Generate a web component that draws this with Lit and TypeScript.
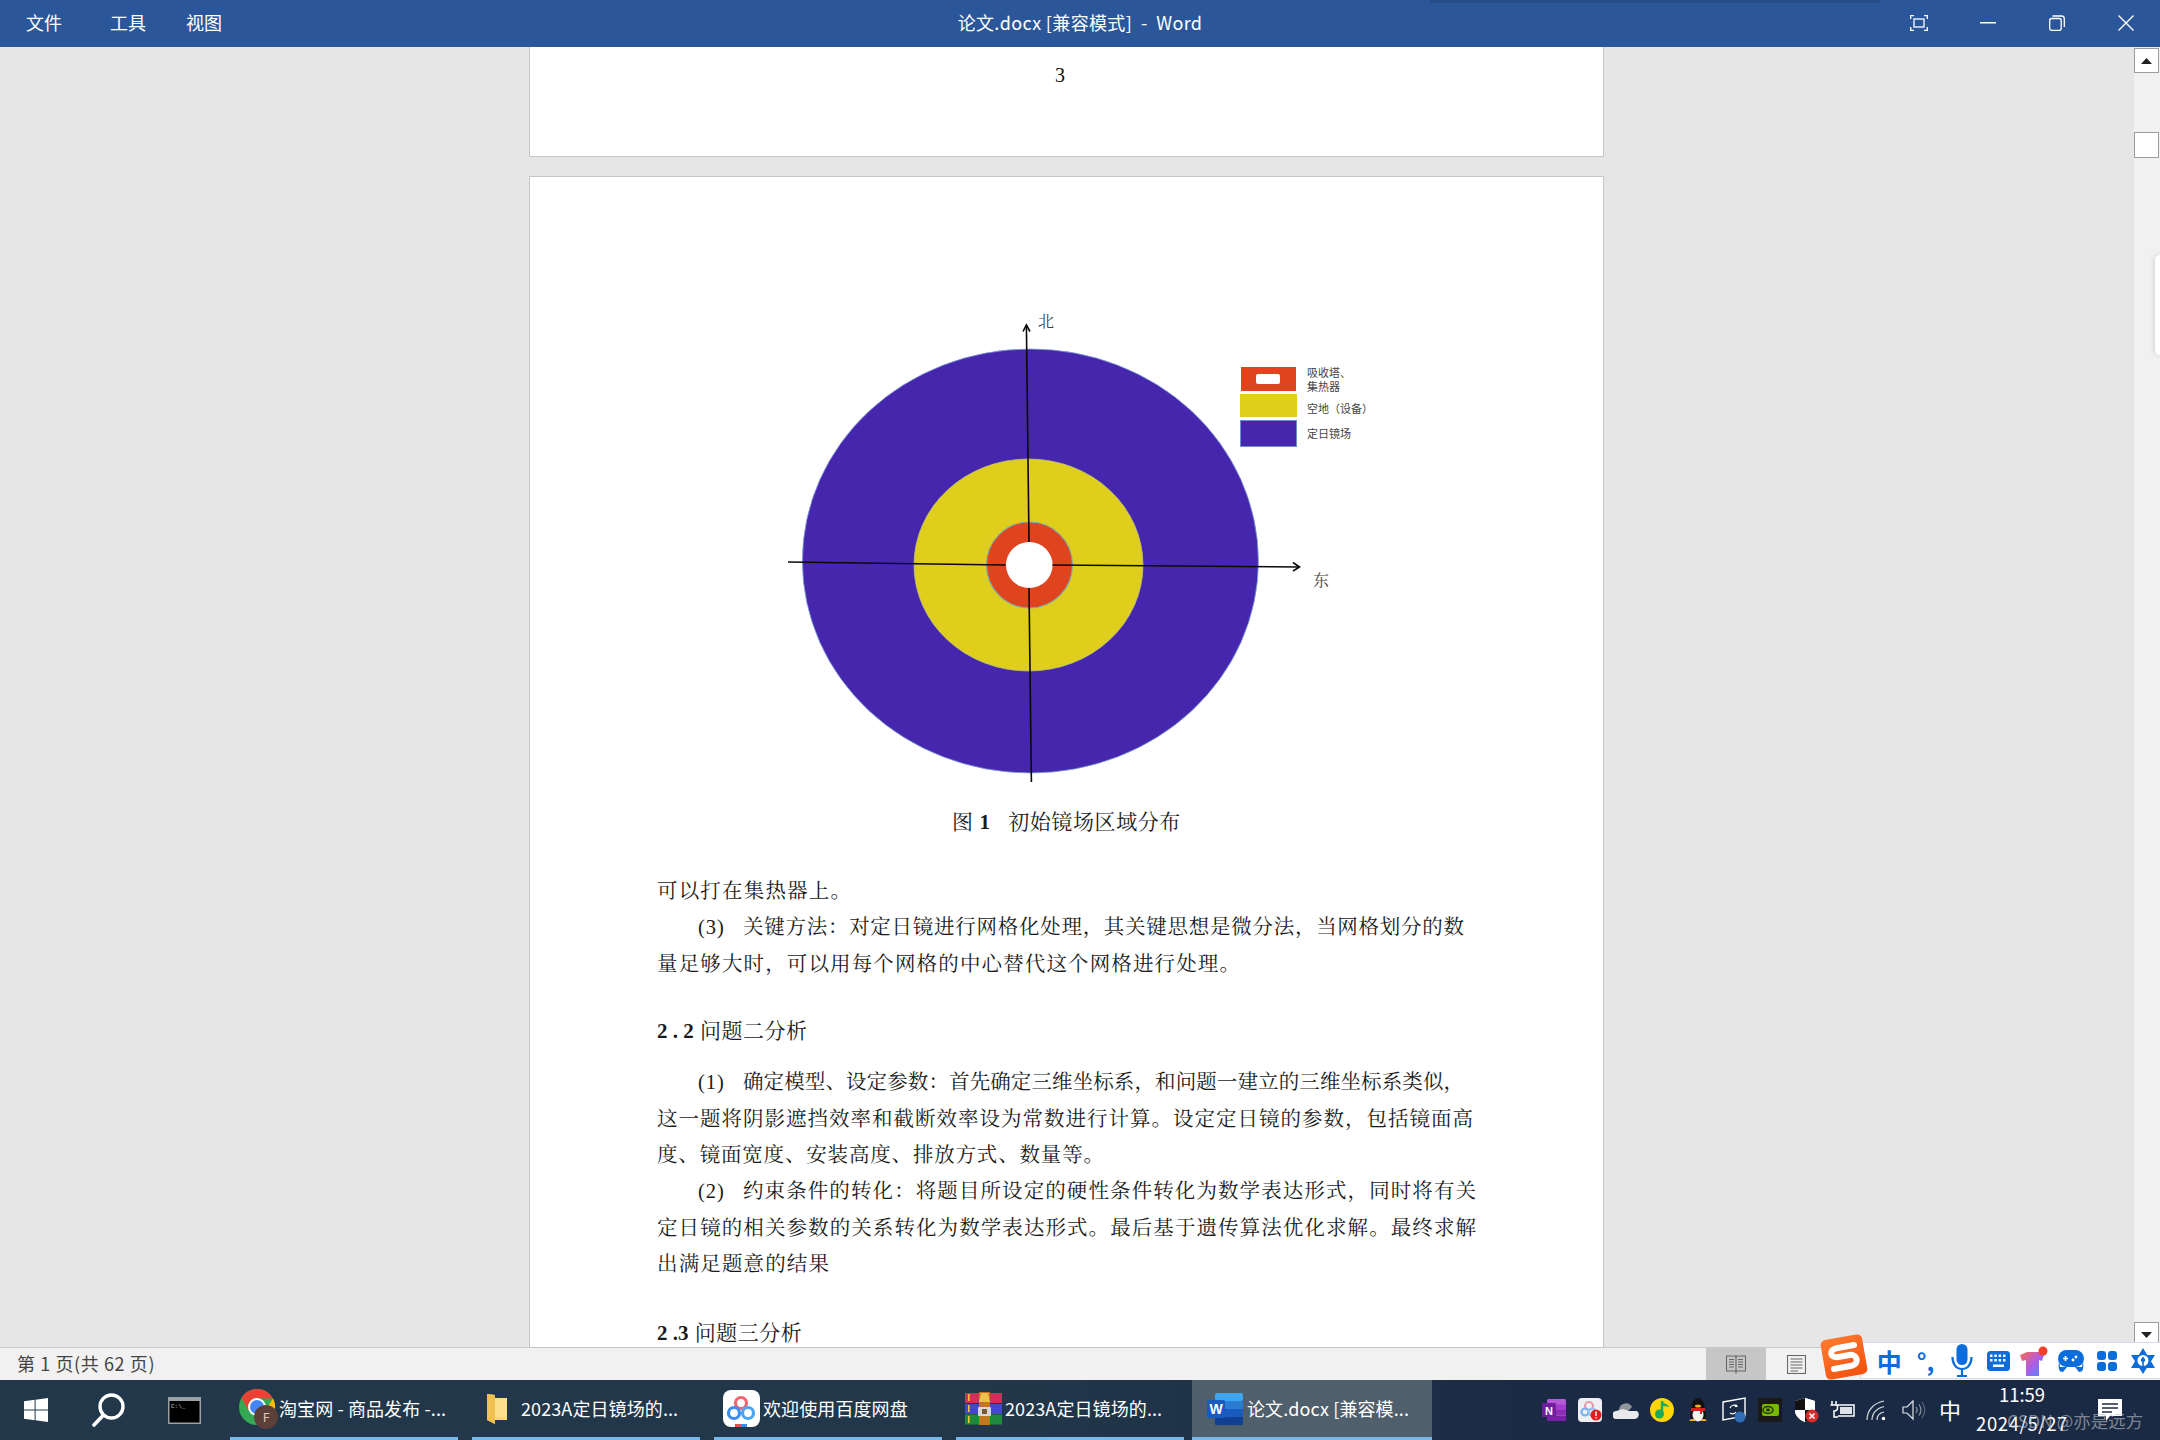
import { LitElement, html, css } from "lit";
import { customElement } from "lit/decorators.js";

type Line = { text: string; end: number; marker?: string };
const START = 657;

const block1: Line[] = [
  { text: "可以打在集热器上。", end: 851 },
  { marker: "(3)", text: "关键方法：对定日镜进行网格化处理，其关键思想是微分法，当网格划分的数", end: 1464 },
  { text: "量足够大时，可以用每个网格的中心替代这个网格进行处理。", end: 1240 },
];
const block2: Line[] = [
  { marker: "(1)", text: "确定模型、设定参数：首先确定三维坐标系，和问题一建立的三维坐标系类似，", end: 1464 },
  { text: "这一题将阴影遮挡效率和截断效率设为常数进行计算。设定定日镜的参数，包括镜面高", end: 1473 },
  { text: "度、镜面宽度、安装高度、排放方式、数量等。", end: 1104 },
  { marker: "(2)", text: "约束条件的转化：将题目所设定的硬性条件转化为数学表达形式，同时将有关", end: 1476 },
  { text: "定日镜的相关参数的关系转化为数学表达形式。最后基于遗传算法优化求解。最终求解", end: 1476 },
  { text: "出满足题意的结果", end: 829 },
];

const figure = html`<svg class="figure" viewBox="530 177 1073 623" width="1073" height="623">
  <ellipse cx="1030.4" cy="561" rx="228" ry="212" fill="#4626ad" stroke="#7f9fd8" stroke-width=".8"/>
  <ellipse cx="1028.5" cy="565" rx="114.5" ry="106" fill="#dfce1c" stroke="#b9c47a" stroke-width=".8"/>
  <circle cx="1029.5" cy="565" r="43" fill="#e0441e" stroke="#7fa9a8" stroke-width="1.2"/>
  <ellipse cx="1029.3" cy="565" rx="23.3" ry="23" fill="#fff"/>
  <g stroke="#0a0a0a" stroke-width="1.6" fill="none">
    <path d="M1026.4 325L1029 542M1029 588L1031.4 782M788 562L1005.7 565M1052.5 565L1299 567"/>
    <path d="M1023 331.5L1026.4 325L1030 331.5M1293 562.5L1299.5 567L1293 571"/>
  </g>
  <g font-family="'Liberation Serif','Noto Serif CJK SC','Noto Sans CJK SC',serif" fill="#444">
    <text x="1038" y="327" font-size="16">北</text>
    <text x="1313" y="586" font-size="16">东</text>
  </g>
  <rect x="1241" y="367" width="55" height="24" fill="#e0441e"/>
  <rect x="1256" y="374" width="24" height="10" rx="2" fill="#fff"/>
  <rect x="1240" y="394" width="57" height="23" fill="#dfce1c"/>
  <rect x="1240.5" y="420.5" width="56" height="26" fill="#4626ad" stroke="#6d8fd0"/>
  <g font-family="'Noto Sans CJK SC',sans-serif" font-size="11" fill="#444">
    <text x="1307" y="377">吸收塔、</text>
    <text x="1307" y="391">集热器</text>
    <text x="1307" y="413">空地（设备）</text>
    <text x="1307" y="438">定日镜场</text>
  </g>
</svg>`;

const ico = {
  win: html`<svg width="24" height="24" viewBox="0 0 24 24" fill="#fff"><path d="M0 3.3L10.6 1.8V11.5H0ZM11.6 1.7L24 0V11.5H11.6ZM0 12.5H10.6V22.2L0 20.7ZM11.6 12.5H24V24L11.6 22.3Z"/></svg>`,
  search: html`<svg width="34" height="34" viewBox="0 0 34 34" fill="none" stroke="#fff"><circle cx="20.5" cy="13.5" r="11.5" stroke-width="3.4"/><path d="M12 22.5L3 32" stroke-width="3.6" stroke-linecap="round"/></svg>`,
  cmd: html`<svg width="33" height="27" viewBox="0 0 33 27"><rect width="33" height="27" fill="#9aa0a4"/><rect x="1.5" y="4" width="30" height="21.5" fill="#000"/><text x="3" y="11" font-size="6" font-family="'Liberation Mono',monospace" fill="#ccc">C:\\_</text></svg>`,
  chrome: html`<svg width="40" height="42" viewBox="0 0 40 42">
    <circle cx="18" cy="19" r="18" fill="#34a853"/>
    <path d="M18 1A18 18 0 0 1 34 10.500L18 10.500Z M18 1A18 18 0 0 0 2.400 10L10 23L18 10.500Z" fill="#ea4335"/>
    <path d="M34 10.500A18 18 0 0 1 18 37L26 23Z" fill="#fbbc05"/>
    <circle cx="18" cy="19" r="9" fill="#fff"/><circle cx="18" cy="19" r="7" fill="#4285f4"/>
    <circle cx="27" cy="29" r="12" fill="#5b3f38"/>
    <text x="27" y="34" text-anchor="middle" font-size="13" font-family="'Noto Sans',sans-serif" fill="#d9c8c0">F</text></svg>`,
  folder: html`<svg width="34" height="32" viewBox="0 0 34 32"><path d="M6 1L14 2V5H26V27H14V31L6 27Z" fill="#fcd670"/><path d="M6 1L14 2V31L6 27Z" fill="#f0c050"/><path d="M14 5H26V24H14Z" fill="#fde08a"/></svg>`,
  baidu: html`<svg width="37" height="37" viewBox="0 0 37 37"><rect width="37" height="37" rx="8" fill="#fff"/><g fill="none" stroke-width="3.200"><circle cx="18" cy="13" r="5.500" stroke="#f0656f"/><circle cx="11" cy="23" r="5.500" stroke="#3d8bf0"/><circle cx="25" cy="23" r="5.500" stroke="#49a6f7"/></g><rect x="12" y="34" width="6" height="3" fill="#ea4d4d"/><rect x="18" y="34" width="6" height="3" fill="#3d8bf0"/></svg>`,
  rar: html`<svg width="37" height="33" viewBox="0 0 37 33"><rect y="1" width="37" height="10" fill="#cf2f5a"/><rect y="12" width="37" height="10" fill="#4248c8"/><rect y="22.500" width="37" height="10" fill="#1d8a3d"/><rect x="3" y="2" width="1.600" height="7" fill="#f5c330"/><rect x="3" y="13" width="1.600" height="7" fill="#f5c330"/><rect x="3" y="24" width="1.600" height="7" fill="#f5c330"/><rect x="14" y="0" width="11" height="33" fill="#c4751e"/><path d="M14 10L16 1H23L25 10Z" fill="#ecc04a"/><rect x="13" y="15" width="13" height="9" rx="1" fill="#d7d7d7"/><rect x="17" y="17" width="5" height="5" fill="#7a5a30"/></svg>`,
  word: html`<svg width="36" height="32" viewBox="0 0 36 32"><rect x="8" width="28" height="32" rx="2" fill="#185abd"/><rect x="8" width="28" height="8" rx="2" fill="#41a5ee"/><rect x="8" y="8" width="28" height="8" fill="#2b7cd3"/><rect x="8" y="16" width="28" height="8" fill="#185abd"/><rect x="8" y="24" width="28" height="8" rx="1" fill="#103f91"/><rect y="7" width="18" height="18" rx="1.500" fill="#185abd"/><text x="9" y="21" text-anchor="middle" font-size="14" font-weight="700" font-family="'Liberation Sans',sans-serif" fill="#fff">W</text></svg>`,
};

const tray = [
  html`<svg width="24" height="22" viewBox="0 0 24 22"><rect x="5" width="19" height="22" rx="1.500" fill="#b55ad6"/><rect x="14" y="5.500" width="10" height="5.500" fill="#a33ccf"/><rect x="14" y="11" width="10" height="5.500" fill="#8a2fb5"/><rect x="5" y="17" width="19" height="5" fill="#7a1fa8"/><rect y="4" width="14" height="14" rx="1" fill="#6d1f9d"/><text x="7" y="15.500" text-anchor="middle" font-size="11" font-weight="700" font-family="'Liberation Sans',sans-serif" fill="#fff">N</text></svg>`,
  html`<svg width="24" height="24" viewBox="0 0 24 24"><rect width="24" height="24" rx="4" fill="#eef0f4"/><g fill="none" stroke-width="2.200"><circle cx="11" cy="8" r="4" stroke="#e79aa6"/><circle cx="7" cy="14" r="3.500" stroke="#7bb2f0"/><circle cx="14" cy="14" r="3.500" stroke="#8cc4f5"/></g><circle cx="18" cy="17" r="5.500" fill="#e02020"/><rect x="17.300" y="13.500" width="1.400" height="4.500" fill="#fff"/><rect x="17.300" y="19" width="1.400" height="1.400" fill="#fff"/></svg>`,
  html`<svg width="26" height="18" viewBox="0 0 26 18"><path d="M6 8A7 7 0 0 1 19 6L14 11L6 10Z" fill="#8f959b"/><path d="M4 18A4 4 0 0 1 3 10L10 8L16 10L24 10A4.500 4.500 0 0 1 22 18Z" fill="#e8e9ea"/></svg>`,
  html`<svg width="24" height="24" viewBox="0 0 24 24"><ellipse cx="12" cy="12" rx="12" ry="12" fill="#fdd60a"/><path d="M12 3V15" stroke="#1ba95f" stroke-width="2.400"/><path d="M12 3C14 6 18 6 19 9C16 8 14 8 12 8Z" fill="#1ba95f"/><circle cx="9.500" cy="16" r="4.500" fill="#1ba95f"/></svg>`,
  html`<svg width="20" height="24" viewBox="0 0 20 24"><ellipse cx="10" cy="9" rx="6.500" ry="9" fill="#111"/><ellipse cx="10" cy="17" rx="8" ry="7" fill="#111"/><ellipse cx="10" cy="17" rx="5.500" ry="6.500" fill="#f4f4f4"/><path d="M3 10H17V13H14V16H12V13H3Z" fill="#d81e1e"/><ellipse cx="10" cy="8" rx="3" ry="1.500" fill="#f2b01e"/><path d="M1 23H8L6 21H3ZM12 23H19L17 21H14Z" fill="#f2b01e"/></svg>`,
  html`<svg width="26" height="26" viewBox="0 0 26 26" fill="none"><path d="M2 5L24 1V19L2 23Z" stroke="#fff" stroke-width="1.400"/><path d="M9 11A4.500 4.500 0 0 1 16 9M15 15A4.500 4.500 0 0 1 9 16" stroke="#fff" stroke-width="1.200"/><path d="M15 7L17 10L13.500 10Z" fill="#fff"/><circle cx="19" cy="20" r="5.500" fill="#2f6db5"/></svg>`,
  html`<svg width="24" height="24" viewBox="0 0 24 24"><rect width="24" height="24" fill="#1a1a1a"/><rect x="4" y="6" width="17" height="12" rx="2" fill="#76b900"/><ellipse cx="10" cy="12" rx="5" ry="3.500" fill="none" stroke="#26320f" stroke-width="1.500"/><ellipse cx="10" cy="12" rx="2" ry="1.400" fill="#26320f"/></svg>`,
  html`<svg width="25" height="25" viewBox="0 0 25 25"><path d="M11 0L21 3V12C21 18 16 22 11 24C6 22 1 18 1 12V3Z" fill="#fff"/><path d="M11 0V12H1V3ZM11 12H21C21 18 16 22 11 24Z" fill="#111"/><path d="M11 0L21 3V12H11ZM1 12H11V24C6 22 1 18 1 12Z" fill="#fff"/><circle cx="18" cy="18" r="6.500" fill="#d92b2b"/><path d="M15.500 15.500L20.500 20.500M20.500 15.500L15.500 20.500" stroke="#fff" stroke-width="1.600"/></svg>`,
  html`<svg width="25" height="20" viewBox="0 0 25 20" fill="none" stroke="#fff" stroke-width="1.500"><path d="M2 1V5M6 1V5M0.500 5H7.500V8C7.500 10 6 11 4 11V17H8"/><path d="M8 5H24V16H8"/><rect x="10" y="7" width="12" height="7" fill="#dfe3e8" stroke="none"/></svg>`,
  html`<svg width="24" height="24" viewBox="0 0 24 24" fill="none" stroke="#d8dce2" stroke-width="1.200"><path d="M1 22C1 12 8 5 18 3M6 22C6 15 11 10 18 8.500M11 22C11 18 13 15 18 14"/><circle cx="17.500" cy="20.500" r="1.700" fill="#fff" stroke="none"/></svg>`,
  html`<svg width="24" height="22" viewBox="0 0 24 22" fill="none" stroke="#dfe2e6" stroke-width="1.200"><path d="M1 8H5L11 2V20L5 14H1Z"/><path d="M14 8C15.500 10 15.500 12 14 14M17 5.500C19.500 9 19.500 13 17 16.500" stroke="#8d96a3"/><path d="M20 3C23.500 8 23.500 14 20 19" stroke="#596576"/></svg>`,
];

const ime = [
  html`<span class="zh">中</span>`,
  html`<span class="dot">°,</span>`,
  html`<svg width="22" height="34" viewBox="0 0 22 34"><rect x="5.500" width="11" height="21" rx="5.500" fill="#0a6ddb"/><path d="M1.500 13C1.500 20 5 25 11 25C17 25 20.500 20 20.500 13" fill="none" stroke="#0a6ddb" stroke-width="2.200"/><path d="M11 25V31M6 32H16" stroke="#0a6ddb" stroke-width="2.200"/></svg>`,
  html`<svg width="23" height="20" viewBox="0 0 23 20"><rect width="23" height="20" rx="3.500" fill="#0a6ddb"/><g fill="#fff"><rect x="3" y="3.500" width="2.500" height="2.500"/><rect x="7.300" y="3.500" width="2.500" height="2.500"/><rect x="11.600" y="3.500" width="2.500" height="2.500"/><rect x="16" y="3.500" width="2.500" height="2.500"/><rect x="3" y="8" width="2.500" height="2.500"/><rect x="7.300" y="8" width="2.500" height="2.500"/><rect x="11.600" y="8" width="2.500" height="2.500"/><rect x="16" y="8" width="2.500" height="2.500"/><rect x="6" y="13.500" width="11" height="2.500"/></g></svg>`,
  html`<svg width="28" height="30" viewBox="0 0 28 30"><defs><linearGradient id="sh" x1="0" y1="0" x2="1" y2="1"><stop offset="0" stop-color="#ff6a4a"/><stop offset=".5" stop-color="#b45ce0"/><stop offset="1" stop-color="#4a8cff"/></linearGradient></defs><path d="M0 9L7 6H19L24 9L22 15L19 14V30H6V14L2 15Z" fill="url(#sh)"/><circle cx="23" cy="5" r="4.500" fill="#f0402a"/></svg>`,
  html`<svg width="26" height="24" viewBox="0 0 26 24"><rect y="1" width="26" height="17" rx="8.500" fill="#0a6ddb"/><path d="M1 12C0 20 1 23 5 23L9 18H2ZM25 12C26 20 25 23 21 23L17 18H24Z" fill="#0a6ddb"/><path d="M5 9.500H10M7.500 7V12" stroke="#fff" stroke-width="1.600"/><circle cx="18" cy="8" r="1.400" fill="#fff"/><circle cx="15" cy="11" r="1.400" fill="#fff"/></svg>`,
  html`<svg width="20" height="20" viewBox="0 0 20 20" fill="#0a6ddb"><rect width="9" height="9" rx="3"/><rect x="11" width="9" height="9" rx="3"/><rect y="11" width="9" height="9" rx="3"/><rect x="11" y="11" width="9" height="9" rx="3"/></svg>`,
  html`<svg width="24" height="26" viewBox="0 0 24 26"><path d="M12 0L24 20H0ZM12 26L0 7H24Z" fill="#0a6ddb"/><circle cx="12" cy="13" r="7.500" fill="#0a6ddb"/><circle cx="12" cy="12.500" r="5.500" fill="#fff"/><path d="M12 8.500L14.500 12L12.800 14.500V19H11.200V14.500L9.500 12Z" fill="#0a6ddb"/></svg>`,
];

@customElement("app-root")
export class AppRoot extends LitElement {
  static styles = css`
    :host { display: block; width: 2160px; height: 1440px; overflow: hidden; font-family: "Noto Sans CJK SC", "Noto Sans", sans-serif; }
    svg { display: block; flex: none; }
    .root { position: relative; width: 2160px; height: 1440px; display: flex; flex-direction: column; }

    .title { position: relative; flex: none; height: 47px; background: #2b579a; color: #fff; display: grid; grid-template-columns: 1fr auto 1fr; align-items: center; font-size: 18px; }
    .shade { position: absolute; left: 1430px; top: 0; width: 450px; height: 3px; background: #264c87; }
    .menu { display: flex; padding: 0 0 3px 26px; }
    .menu span:nth-child(2) { margin-left: 48px; }
    .menu span:nth-child(3) { margin-left: 40px; }
    .doc-title { white-space: pre; letter-spacing: .35px; padding-bottom: 3px; }
    .wins { display: flex; justify-content: flex-end; }
    .win { width: 69px; height: 47px; display: flex; align-items: center; justify-content: center; padding-bottom: 1px; box-sizing: border-box; }

    .main { flex: none; height: 1300px; display: flex; background: #e6e6e6; overflow: hidden; }
    .scroller { flex: 1; display: flex; flex-direction: column; align-items: center; overflow: hidden; padding-right: 1px; }
    .page { flex: none; width: 1075px; box-sizing: border-box; background: #fff; border: 1px solid #c6c6c6; }
    .page.top { height: 110px; border-top: none; text-align: center; padding: 12px 13px 0 0; font: 20px/32px "Liberation Serif", serif; color: #111; }
    .page.body { margin-top: 19px; padding: 0 0 400px 127px; }
    .figure { margin-left: -127px; }
    .doc { font-family: "Liberation Serif", "Noto Serif CJK SC", "Noto Sans CJK SC", serif; font-size: 21px; color: #1a1a1a; }
    .caption { margin: 4px 0 0 -127px; width: 1073px; text-align: center; line-height: 36px; letter-spacing: .6px; white-space: pre; }
    b { font-family: "Liberation Serif", serif; font-weight: 700; }
    .para { margin-top: 33px; }
    .para.next { margin-top: 15px; }
    .line { display: flex; height: 36.4px; line-height: 36.4px; white-space: nowrap; font-size: 20.5px; }
    .mark { flex: none; width: 86px; padding-left: 41px; box-sizing: border-box; font-family: "Liberation Serif", serif; letter-spacing: 1px; }
    .txt { flex: 1; text-align: justify; text-align-last: justify; white-space: normal; }
    .h { line-height: 36px; height: 36px; margin-top: 31px; letter-spacing: .5px; white-space: pre; }
    .h b { letter-spacing: 0; padding-right: 1px; }
    .h.two { margin-top: 32px; }

    .sb { flex: none; width: 26px; background: #f1f1f1; display: flex; flex-direction: column; position: relative; }
    .sbb { width: 25px; box-sizing: border-box; background: #fff; border: 1px solid #9c9c9c; display: flex; align-items: center; justify-content: center; }
    .sbb.up { height: 25px; margin-top: 1px; }
    .sbb.thumb { height: 26px; margin-top: 59px; }
    .sbb.down { height: 25px; margin-top: auto; }
    .tab { position: absolute; right: 0; top: 208px; width: 5px; height: 100px; background: #fff; border-radius: 6px 0 0 6px; box-shadow: 0 0 6px rgba(0,0,0,.18); }

    .status { flex: none; height: 33px; background: #f1f1f1; display: flex; align-items: center; color: #444; font-size: 18px; border-top: 1px solid #c6c6c6; box-sizing: border-box; }
    .pages { padding: 0 0 2px 17px; white-space: pre; letter-spacing: .6px; }
    .views { margin-left: auto; margin-right: 334px; display: flex; }
    .view { width: 60px; height: 32px; display: flex; align-items: center; justify-content: center; }
    .view.on { background: #c6c6c6; }

    .taskbar { position: relative; flex: none; height: 60px; display: flex; color: #fff; font-size: 18px; background: linear-gradient(90deg, #22384a 0, #22384a 45%, #1b2a44 72%); }
    .tb { flex: none; height: 60px; display: flex; align-items: center; justify-content: center; }
    .tb.start { width: 72px; }
    .tb.search { width: 64px; justify-content: flex-start; padding-left: 19px; box-sizing: border-box; }
    .tb.cmd { width: 94px; justify-content: flex-start; padding-left: 32px; box-sizing: border-box; }
    .task { flex: none; width: 228px; height: 60px; margin-left: 14px; box-sizing: border-box; padding-left: 9px; border-bottom: 3px solid #76b9ed; display: flex; align-items: center; white-space: nowrap; overflow: hidden; }
    .task.first { margin-left: 0; }
    .task.active { width: 240px; margin-left: 8px; padding-left: 15px; background: #4f5f6b; }
    .task span { letter-spacing: .1px; padding-bottom: 2px; }
    .ti { flex: none; width: 40px; height: 57px; display: flex; align-items: center; }
    .tray { position: absolute; left: 1536px; top: 0; height: 60px; display: flex; align-items: center; }
    .tc { width: 36px; display: flex; align-items: center; justify-content: center; }
    .tc.zh { font-size: 22px; padding-bottom: 2px; box-sizing: border-box; }
    .clock { width: 108px; text-align: center; font-size: 18.5px; line-height: 29px; white-space: nowrap; padding-bottom: 3px; }
    .date { letter-spacing: .6px; }
    .note { margin-left: 16px; }
    .mark-w { position: absolute; left: 2007px; top: 1408px; font-size: 17.5px; line-height: 26px; color: rgba(190,195,200,.62); white-space: nowrap; }

    .ime { position: absolute; left: 1860px; top: 1342px; width: 300px; height: 37px; box-sizing: border-box; background: #fff; border: 1px solid #d3dbe6; border-right: none; display: flex; align-items: center; padding-left: 10px; }
    .ic { flex: none; width: 36.3px; display: flex; align-items: center; justify-content: center; }
    .ime .zh { color: #0a6ddb; font-size: 25px; font-weight: 700; line-height: 30px; }
    .ime .dot { color: #0a6ddb; font-size: 24px; font-weight: 700; line-height: 30px; }
    .sogou { position: absolute; left: 1823px; top: 1337px; width: 42px; height: 40px; transform: rotate(-10deg); border-radius: 5px; background: linear-gradient(160deg, #ff7b30, #f2500f); display: flex; align-items: center; justify-content: center; }
  `;

  private renderLine(l: Line) {
    return html`<div class="line" style="width:${l.end - START}px">
      ${l.marker ? html`<span class="mark">${l.marker}</span>` : ""}<span class="txt">${l.text}</span>
    </div>`;
  }

  render() {
    return html`<div class="root">
      <div class="title">
        <div class="shade"></div>
        <div class="menu"><span>文件</span><span>工具</span><span>视图</span></div>
        <div class="doc-title">论文.docx [兼容模式]  -  Word</div>
        <div class="wins">
          <div class="win"><svg width="18" height="16" viewBox="0 0 18 16" fill="none" stroke="#fff" stroke-width="1.300"><rect x="4" y="4" width="10" height="8"/><path d="M.7 4V.7H4M14 .7H17.300V4M17.300 12V15.300H14M4 15.300H.7V12"/></svg></div>
          <div class="win"><svg width="16" height="2" viewBox="0 0 16 2"><rect width="16" height="1.500" fill="#fff"/></svg></div>
          <div class="win"><svg width="16" height="16" viewBox="0 0 16 16" fill="none" stroke="#fff" stroke-width="1.300"><rect x=".7" y="3.500" width="11.500" height="11.800" rx="2"/><path d="M3.500 1H12.500A2.800 2.800 0 0 1 15.300 3.800V12"/></svg></div>
          <div class="win"><svg width="16" height="16" viewBox="0 0 16 16" stroke="#fff" stroke-width="1.400"><path d="M.5 .5L15.500 15.500M15.500 .5L.5 15.500"/></svg></div>
        </div>
      </div>

      <div class="main">
        <div class="scroller doc">
          <div class="page top">3</div>
          <div class="page body">
            ${figure}
            <div class="caption">图 <b>1</b>   初始镜场区域分布</div>
            <div class="para">${block1.map((l) => this.renderLine(l))}</div>
            <div class="h"><b>2 . 2 </b>问题二分析</div>
            <div class="para next">${block2.map((l) => this.renderLine(l))}</div>
            <div class="h two"><b>2 .3 </b>问题三分析</div>
          </div>
        </div>
        <div class="sb">
          <div class="sbb up"><svg width="11" height="6" viewBox="0 0 11 6"><path d="M5.500 0L11 6H0Z" fill="#222"/></svg></div>
          <div class="sbb thumb"></div>
          <div class="tab"></div>
          <div class="sbb down"><svg width="11" height="6" viewBox="0 0 11 6"><path d="M0 0H11L5.500 6Z" fill="#222"/></svg></div>
        </div>
      </div>

      <div class="status">
        <div class="pages">第 1 页(共 62 页)</div>
        <div class="views">
          <div class="view on"><svg width="20" height="20" viewBox="0 0 20 20" fill="none" stroke="#666" stroke-width="1.100"><path d="M.5 2H9.500L10 3L10.500 2H19.500V17H10.500L10 18.500L9.500 17H.5Z"/><path d="M10 3V17M3 5.500H8M3 8H8M3 10.500H8M3 13H8M12 5.500H17M12 8H17M12 10.500H17M12 13H17"/></svg></div>
          <div class="view"><svg width="19" height="19" viewBox="0 0 19 19" fill="none" stroke="#666" stroke-width="1.100"><rect x=".5" y=".5" width="18" height="18"/><path d="M3.500 4H15.500M3.500 7H15.500M3.500 10H15.500M3.500 13H15.500M3.500 16H11"/></svg></div>
        </div>
      </div>

      <div class="taskbar">
        <div class="tb start">${ico.win}</div>
        <div class="tb search">${ico.search}</div>
        <div class="tb cmd">${ico.cmd}</div>
        <div class="task first"><div class="ti">${ico.chrome}</div><span>淘宝网 - 商品发布 -...</span></div>
        <div class="task"><div class="ti">${ico.folder}</div><span>2023A定日镜场的...</span></div>
        <div class="task"><div class="ti">${ico.baidu}</div><span>欢迎使用百度网盘</span></div>
        <div class="task"><div class="ti">${ico.rar}</div><span>2023A定日镜场的...</span></div>
        <div class="task active"><div class="ti">${ico.word}</div><span>论文.docx [兼容模...</span></div>
        <div class="tray">
          ${tray.map((t) => html`<div class="tc">${t}</div>`)}
          <div class="tc zh">中</div>
          <div class="clock"><div>11:59</div><div class="date">2024/5/27</div></div>
          <div class="tc note"><svg width="24" height="22" viewBox="0 0 24 22"><path d="M0 0H24V17H12L8 22V17H0Z" fill="#fff"/><path d="M4 5H20M4 9H20M4 13H14" stroke="#1b2a44" stroke-width="1.300"/></svg></div>
        </div>
      </div>

      <div class="mark-w">CSDN @亦是远方</div>
      <div class="ime">${ime.map((i) => html`<div class="ic">${i}</div>`)}</div>
      <div class="sogou"><svg width="34" height="30" viewBox="0 0 34 30" fill="none" stroke="#fff" stroke-width="6" stroke-linecap="round"><path d="M29 5H11C3 5 3 14 11 14H23C31 14 31 25 23 25H5"/></svg></div>
    </div>`;
  }
}
